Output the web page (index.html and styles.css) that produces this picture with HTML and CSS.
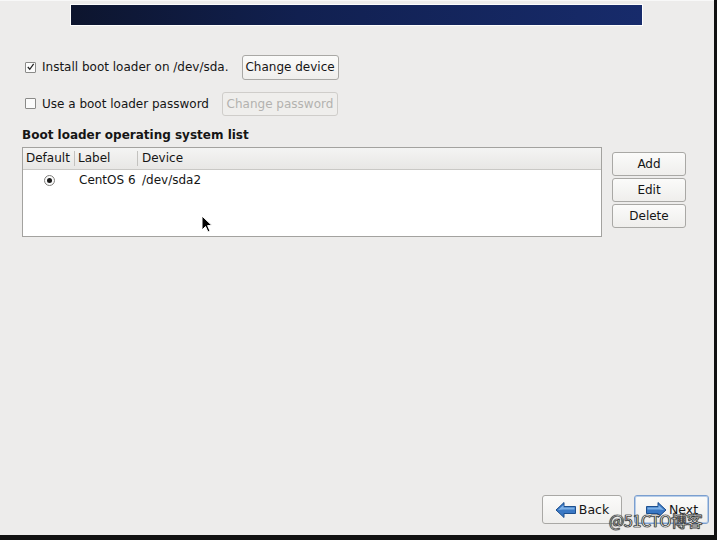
FILE: index.html
```html
<!DOCTYPE html>
<html>
<head>
<meta charset="utf-8">
<link rel="stylesheet" href="styles.css">
</head>
<body>
<div class="screen">
  <div class="banner"></div>

  <div class="opt-row row1">
    <label class="check"><span class="box checked"><svg width="10" height="10" viewBox="0 0 10 10"><path d="M2 5 L4.2 7.5 L8.5 1.5" fill="none" stroke="#222" stroke-width="1.4"/></svg></span>Install boot loader on /dev/sda.</label>
    <button class="btn">Change device</button>
  </div>
  <div class="opt-row row2">
    <label class="check"><span class="box"></span>Use a boot loader password</label>
    <button class="btn disabled">Change password</button>
  </div>

  <div class="section-title">Boot loader operating system list</div>

  <div class="list-area">
    <div class="list">
      <div class="list-head">
        <div class="col c1">Default</div>
        <div class="col c2">Label</div>
        <div class="col c3">Device</div>
      </div>
      <div class="list-row">
        <div class="cell c1"><span class="radio"><span class="dot"></span></span></div>
        <div class="cell c2">CentOS 6</div>
        <div class="cell c3">/dev/sda2</div>
      </div>
    </div>
    <div class="side-btns">
      <button class="btn side">Add</button>
      <button class="btn side">Edit</button>
      <button class="btn side">Delete</button>
    </div>
  </div>

  <div class="spacer"></div>

  <div class="nav">
    <button class="btn navbtn back"><svg width="22" height="18" viewBox="0 0 22 18"><path d="M1 9 L9 1.5 L9 5.5 L20.5 5.5 L20.5 12.5 L9 12.5 L9 16.5 Z" fill="#3a78c4" stroke="#1d4f8e" stroke-width="1"/><path d="M3 9 L8.5 4 L8.5 6.5 L19.5 6.5 L19.5 8.5 L8.5 8.5 Z" fill="#7fb1e6"/></svg>Back</button>
    <button class="btn navbtn next"><svg width="22" height="18" viewBox="0 0 22 18"><path d="M21 9 L13 1.5 L13 5.5 L1.5 5.5 L1.5 12.5 L13 12.5 L13 16.5 Z" fill="#3a78c4" stroke="#1d4f8e" stroke-width="1"/><path d="M19 9 L13.5 4 L13.5 6.5 L2.5 6.5 L2.5 8.5 L13.5 8.5 Z" fill="#7fb1e6"/></svg>Next</button>
  </div>

  <div class="watermark">@51CTO博客</div>
  <svg class="cursor" width="12" height="19" viewBox="0 0 12 19"><path d="M1 1 L1 15 L4.5 11.5 L7 17 L9 16 L6.6 10.6 L11 10.6 Z" fill="#000" stroke="#fff" stroke-width="1"/></svg>
</div>
</body>
</html>
```

FILE: styles.css
```css
html, body {
  margin: 0;
  padding: 0;
}
body {
  width: 717px;
  height: 540px;
  background: #111;
  overflow: hidden;
  font-family: "DejaVu Sans", sans-serif;
  font-size: 12px;
  color: #151515;
}
.screen {
  position: relative;
  width: 714px;
  height: 535px;
  background: #edeceb;
  display: flex;
  flex-direction: column;
  border-top: 1px solid #f8f8f8;
  box-sizing: border-box;
}
.banner {
  margin: 3px 0 0 70px;
  width: 573px;
  height: 22px;
  box-sizing: border-box;
  border: 1px solid #fdfdfd;
  background: linear-gradient(to right, #0d152e, #112050 40%, #172b6b);
}
.opt-row {
  display: flex;
  align-items: center;
  padding-left: 25px;
}
.row1 { margin-top: 28px; height: 26px; }
.row2 { margin-top: 11px; height: 25px; }
.check {
  display: flex;
  align-items: center;
  white-space: nowrap;
}
.box {
  display: inline-flex;
  align-items: center;
  justify-content: center;
  width: 9px;
  height: 9px;
  border: 1px solid #8a8a88;
  background: #fbfbfb;
  margin-right: 6px;
  border-radius: 1px;
}
.btn {
  font-family: "DejaVu Sans", sans-serif;
  font-size: 12px;
  color: #151515;
  background: linear-gradient(#fbfbfa, #efeeec);
  border: 1px solid #a9a8a5;
  border-radius: 3px;
  padding: 0;
  height: 25px;
  box-sizing: border-box;
  margin: 0;
  white-space: nowrap;
}
.row1 .btn { margin-left: 13px; width: 97px; }
.row2 .btn { margin-left: 13px; width: 116px; height: 24px; }
.btn.disabled {
  color: #b3b2af;
  border-color: #cfcdca;
  background: #efeeec;
}
.section-title {
  font-weight: bold;
  margin: 11px 0 0 22px;
  height: 16px;
  line-height: 16px;
}
.list-area {
  display: flex;
  margin: 4px 0 0 22px;
}
.list {
  width: 580px;
  height: 90px;
  box-sizing: border-box;
  border: 1px solid #a3a29f;
  background: #fff;
}
.list-head {
  display: flex;
  height: 21px;
  background: linear-gradient(#f4f4f3, #e8e7e5);
  border-bottom: 1px solid #c9c8c5;
  align-items: center;
}
.col {
  height: 15px;
  line-height: 15px;
  padding-left: 3px;
  box-sizing: border-box;
  border-right: 1px solid #c3c2bf;
}
.col.c3 { border-right: none; flex: 1; padding-left: 4px; }
.c1 { width: 52px; }
.c2 { width: 63px; }
.list-row {
  display: flex;
  height: 20px;
  align-items: center;
}
.cell { padding-left: 3px; box-sizing: border-box; }
.cell.c1 { display: flex; justify-content: center; padding-left: 1px; }
.cell.c2 { padding-left: 4px; }
.cell.c3 { padding-left: 4px; }
.radio {
  width: 9px;
  height: 9px;
  border: 1px solid #7f7e7b;
  border-radius: 50%;
  background: #fbfbfb;
  display: flex;
  align-items: center;
  justify-content: center;
}
.dot {
  width: 5px;
  height: 5px;
  border-radius: 50%;
  background: #1a1a1a;
}
.side-btns {
  display: flex;
  flex-direction: column;
  gap: 2px;
  margin: 5px 0 0 10px;
}
.btn.side {
  width: 74px;
  height: 24px;
}
.spacer { flex: 1; }
.nav {
  display: flex;
  justify-content: flex-end;
  gap: 12px;
  padding-right: 5px;
  margin-bottom: 11px;
}
.btn.navbtn {
  height: 29px;
  display: flex;
  align-items: center;
  justify-content: center;
  gap: 2px;
  font-size: 12.5px;
}
.btn.navbtn svg { flex: none; }
.btn.back { width: 80px; }
.btn.next {
  width: 75px;
  border-color: #7b9fcf;
  box-shadow: inset 0 0 0 1px #b7cde9;
}
.watermark {
  position: absolute;
  left: 609px;
  top: 508px;
  font-family: "Noto Sans CJK SC", "DejaVu Sans", sans-serif;
  font-size: 16px;
  line-height: 22px;
  color: #fff;
  -webkit-text-stroke: 0.6px #333;
  text-shadow: 0 0 1px #000, 0 0 1px #000;
  letter-spacing: -0.3px;
}
.cursor {
  position: absolute;
  left: 201px;
  top: 214px;
}
```
